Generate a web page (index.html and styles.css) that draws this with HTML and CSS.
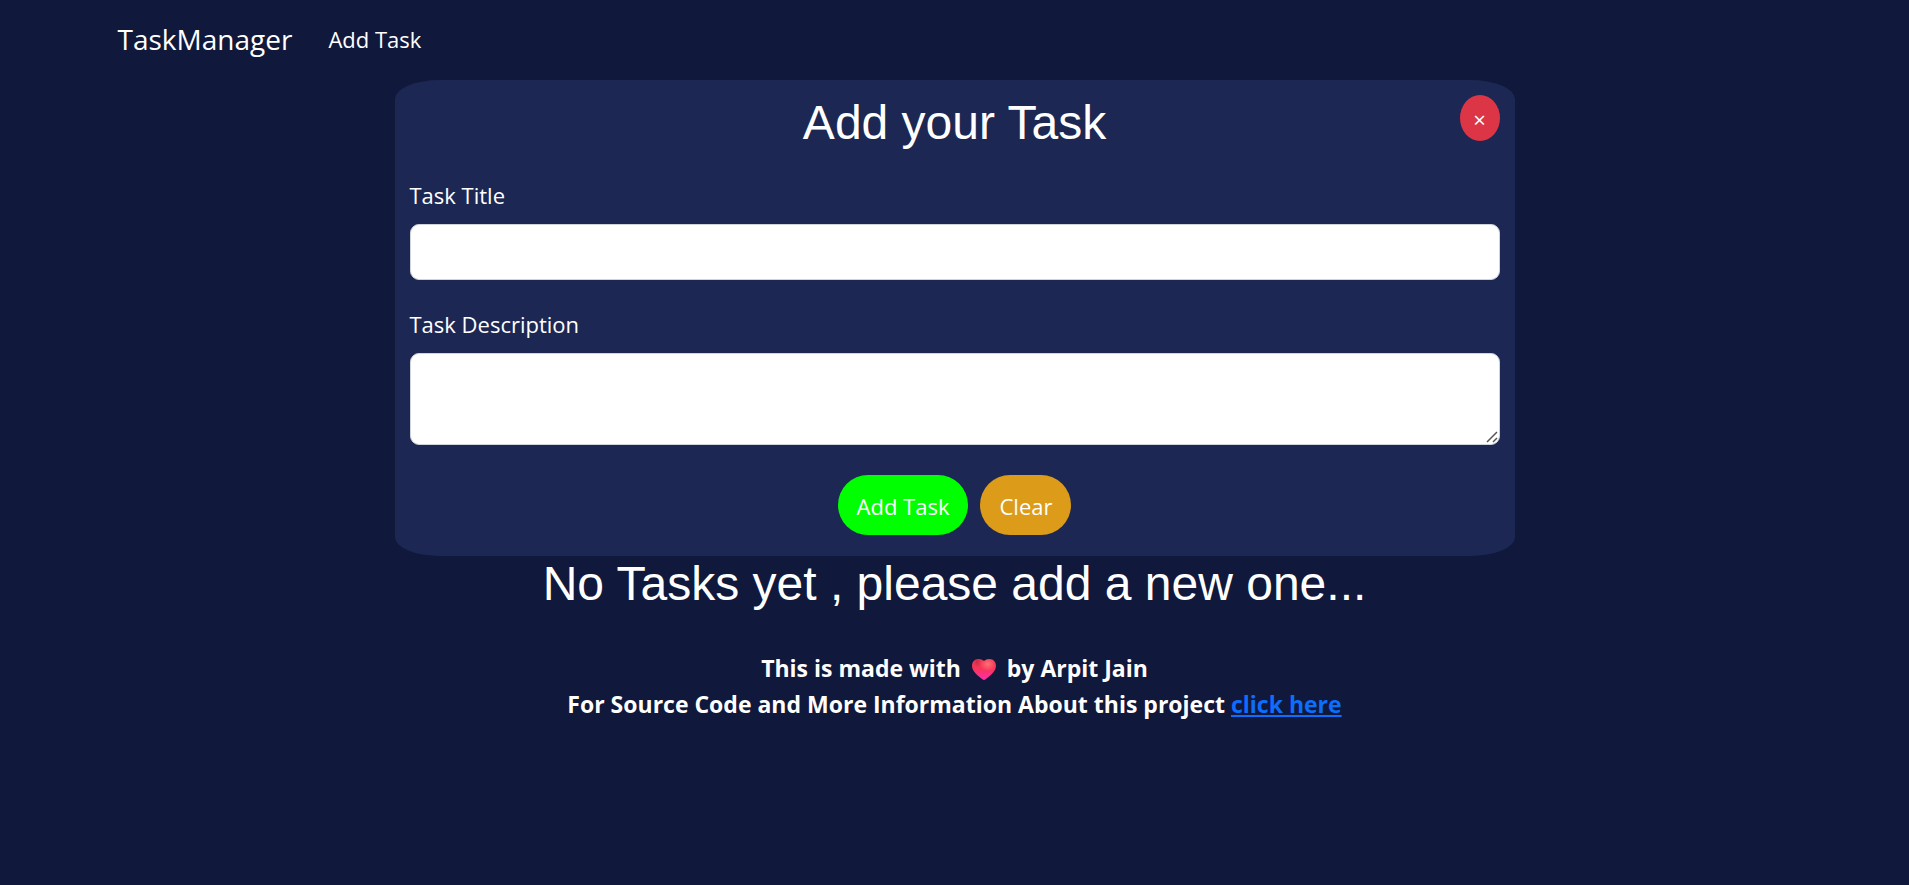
FILE: index.html
```html
<!DOCTYPE html>
<html lang="en">
<head>
<meta charset="utf-8">
<meta name="viewport" content="width=device-width, initial-scale=1">
<title>TaskManager</title>
<link rel="stylesheet" href="styles.css">
</head>
<body>
<nav class="navbar">
  <a class="brand" href="#">TaskManager</a>
  <a class="nav-link" href="#add-task">Add Task</a>
</nav>
<main>
  <form class="card" id="add-task">
    <button class="close" type="button" aria-label="Close">×</button>
    <h1 class="heading">Add your Task</h1>
    <div class="field">
      <label class="label" for="title">Task Title</label>
      <input class="control" id="title" type="text">
    </div>
    <div class="field">
      <label class="label" for="description">Task Description</label>
      <div class="area-wrap">
        <textarea class="control area" id="description"></textarea>
        <svg class="grip" viewBox="0 0 12 12" aria-hidden="true">
          <path d="M1 11L11 1M7 11L11 7" fill="none" stroke="#555" stroke-width="1.500"/>
        </svg>
      </div>
    </div>
    <div class="actions">
      <button class="btn btn-add" type="button">Add Task</button>
      <button class="btn btn-clear" type="reset">Clear</button>
    </div>
  </form>
  <h2 class="heading">No Tasks yet , please add a new one...</h2>
</main>
<footer class="footer">
  <p class="line">This is made with
    <svg class="heart" viewBox="0 0 24 21" role="img" aria-label="love">
      <defs>
        <linearGradient id="base" x1="0" y1="0" x2="0" y2="1">
          <stop offset="0" stop-color="#e8384f"/>
          <stop offset="0.5" stop-color="#f9345c"/>
          <stop offset="1" stop-color="#fb2fb0"/>
        </linearGradient>
        <radialGradient id="shine" cx="0.66" cy="0.24" r="0.34">
          <stop offset="0" stop-color="#ff7078"/>
          <stop offset="1" stop-color="#ff7078" stop-opacity="0"/>
        </radialGradient>
        <radialGradient id="shade" cx="0.42" cy="0.14" r="0.26">
          <stop offset="0" stop-color="#c42840" stop-opacity="0.8"/>
          <stop offset="1" stop-color="#c42840" stop-opacity="0"/>
        </radialGradient>
      </defs>
      <path fill="url(#base)" d="M12 2C10.500.7 8.800 0 6.600 0 2.800 0 0 2.800 0 6.700c0 5.600 5.700 9.800 10.700 13.800.8.600 1.800.600 2.600 0C18.300 16.500 24 12.300 24 6.700 24 2.800 21.200 0 17.400 0 15.200 0 13.500.7 12 2z"/>
      <path fill="url(#shade)" d="M12 2C10.500.7 8.800 0 6.600 0 2.800 0 0 2.800 0 6.700c0 5.600 5.700 9.800 10.700 13.800L12 21z"/>
      <path fill="url(#shine)" d="M12 2C10.500.7 8.800 0 6.600 0 2.800 0 0 2.800 0 6.700c0 5.600 5.700 9.800 10.700 13.800.8.600 1.800.600 2.600 0C18.300 16.500 24 12.300 24 6.700 24 2.800 21.200 0 17.400 0 15.200 0 13.500.7 12 2z"/>
    </svg>
    by Arpit Jain</p>
  <p class="line">For Source Code and More Information About this project <a class="source" href="#">click here</a></p>
</footer>
</body>
</html>
```
FILE: styles.css
```css
* {
  box-sizing: border-box;
}

body {
  margin: 0;
  background: #10183b;
  color: #fff;
  font-family: "Open Sans", "Noto Sans", sans-serif;
  font-size: 22px;
  line-height: 36px;
}

.navbar {
  display: flex;
  align-items: center;
  gap: 36px;
  max-width: 1710px;
  min-height: 80px;
  margin: 0 auto;
  padding: 0 18px 2px;
}

.brand,
.nav-link {
  color: #fff;
  text-decoration: none;
}

.brand {
  font-size: 28px;
}

.card {
  position: relative;
  width: 90%;
  max-width: 1120px;
  margin: 0 auto;
  padding: 15px 15px 21px;
  background: #1d2753;
  border-radius: 4%;
}

.heading {
  margin: 0;
  font-family: "Liberation Sans", Arial, sans-serif;
  font-size: 48px;
  font-weight: 400;
  line-height: 56px;
  text-align: center;
}

.close {
  position: absolute;
  top: 15px;
  right: 15px;
  width: 40px;
  height: 46px;
  padding: 2px 0 0;
  border: 0;
  border-radius: 50%;
  background: #dc3545;
  color: #fff;
  font-family: "Open Sans", sans-serif;
  font-size: 22px;
}

.field {
  display: flex;
  flex-direction: column;
  gap: 11px;
  padding-top: 26px;
}

.control {
  display: block;
  width: 100%;
  height: 56px;
  padding: 9px 18px;
  border: 1px solid #ced4da;
  border-radius: 9px;
  background: #fff;
  color: #212529;
  font: inherit;
}

.area-wrap {
  position: relative;
}

.area {
  height: 92px;
  resize: vertical;
}

.area::-webkit-resizer {
  background: transparent;
}

.grip {
  position: absolute;
  right: 2px;
  bottom: 2px;
  width: 12px;
  height: 12px;
  pointer-events: none;
}

.actions {
  display: flex;
  justify-content: center;
  gap: 12px;
  padding-top: 30px;
}

.btn {
  height: 60px;
  padding: 2px 19px 0;
  border: 0;
  border-radius: 30px;
  color: #fff;
  font: inherit;
}

.btn-add {
  background: #0f0;
}

.btn-clear {
  background: #dc9b18;
}

.footer {
  padding-top: 38px;
  font-size: 23px;
  font-weight: 700;
  text-align: center;
}

.line {
  margin: 0;
}

.heart {
  width: 24px;
  height: 21px;
  margin: 0 5px;
  vertical-align: -3px;
}

.source {
  color: #0d6efd;
}
```
